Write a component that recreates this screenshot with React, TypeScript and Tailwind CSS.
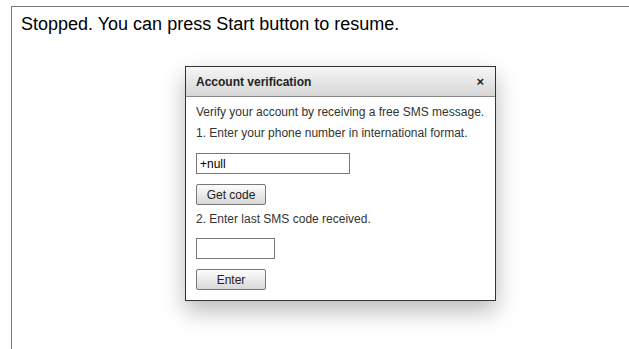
import React from 'react';

const App: React.FC = () => {
  return (
    <div className="w-[629px] h-[349px] overflow-hidden bg-white font-['Liberation_Sans',Arial,sans-serif]">
      <div className="ml-[11px] mt-[6px] h-[400px] border-l border-t border-[#777] pl-[9px] pt-[7px]">
        <p className="text-[18px] leading-[21px] text-black">Stopped. You can press Start button to resume.</p>

        <div className="ml-[164px] mt-[31px] w-[311px] border border-[#333] bg-white shadow-[0_10px_22px_rgba(0,0,0,0.28)]">
          <div className="flex h-[30px] items-center justify-between border-b border-[#888] bg-gradient-to-b from-[#f6f6f6] to-[#d6d6d6] pl-[10px] pr-[11px]">
            <span className="text-[12px] font-bold text-[#222]">Account verification</span>
            <span className="text-[13px] font-bold leading-none text-[#222]">×</span>
          </div>

          <div className="px-[10px] pt-[5px] pb-[10px] text-[12px] text-[#333]">
            <div className="leading-[21px]">Verify your account by receiving a free SMS message.</div>
            <div className="leading-[21px]">1. Enter your phone number in international format.</div>
            <input
              type="text"
              defaultValue="+null"
              className="mt-[9px] block h-[21px] w-[154px] border border-[#777] bg-white px-[3px] text-[12px] text-black outline-none"
            />
            <button
              type="button"
              className="mt-[10px] block h-[21px] w-[70px] rounded-[2px] border border-[#777] bg-gradient-to-b from-[#fdfdfd] to-[#d8d8d8] text-[12px] text-[#222]"
            >
              Get code
            </button>
            <div className="mt-[4px] leading-[21px]">2. Enter last SMS code received.</div>
            <input
              type="text"
              className="mt-[8px] block h-[21px] w-[79px] border border-[#777] bg-white px-[3px] text-[12px] text-black outline-none"
            />
            <button
              type="button"
              className="mt-[10px] block h-[21px] w-[70px] rounded-[2px] border border-[#777] bg-gradient-to-b from-[#fdfdfd] to-[#d8d8d8] text-[12px] text-[#222]"
            >
              Enter
            </button>
          </div>
        </div>
      </div>
    </div>
  );
};

export default App;
